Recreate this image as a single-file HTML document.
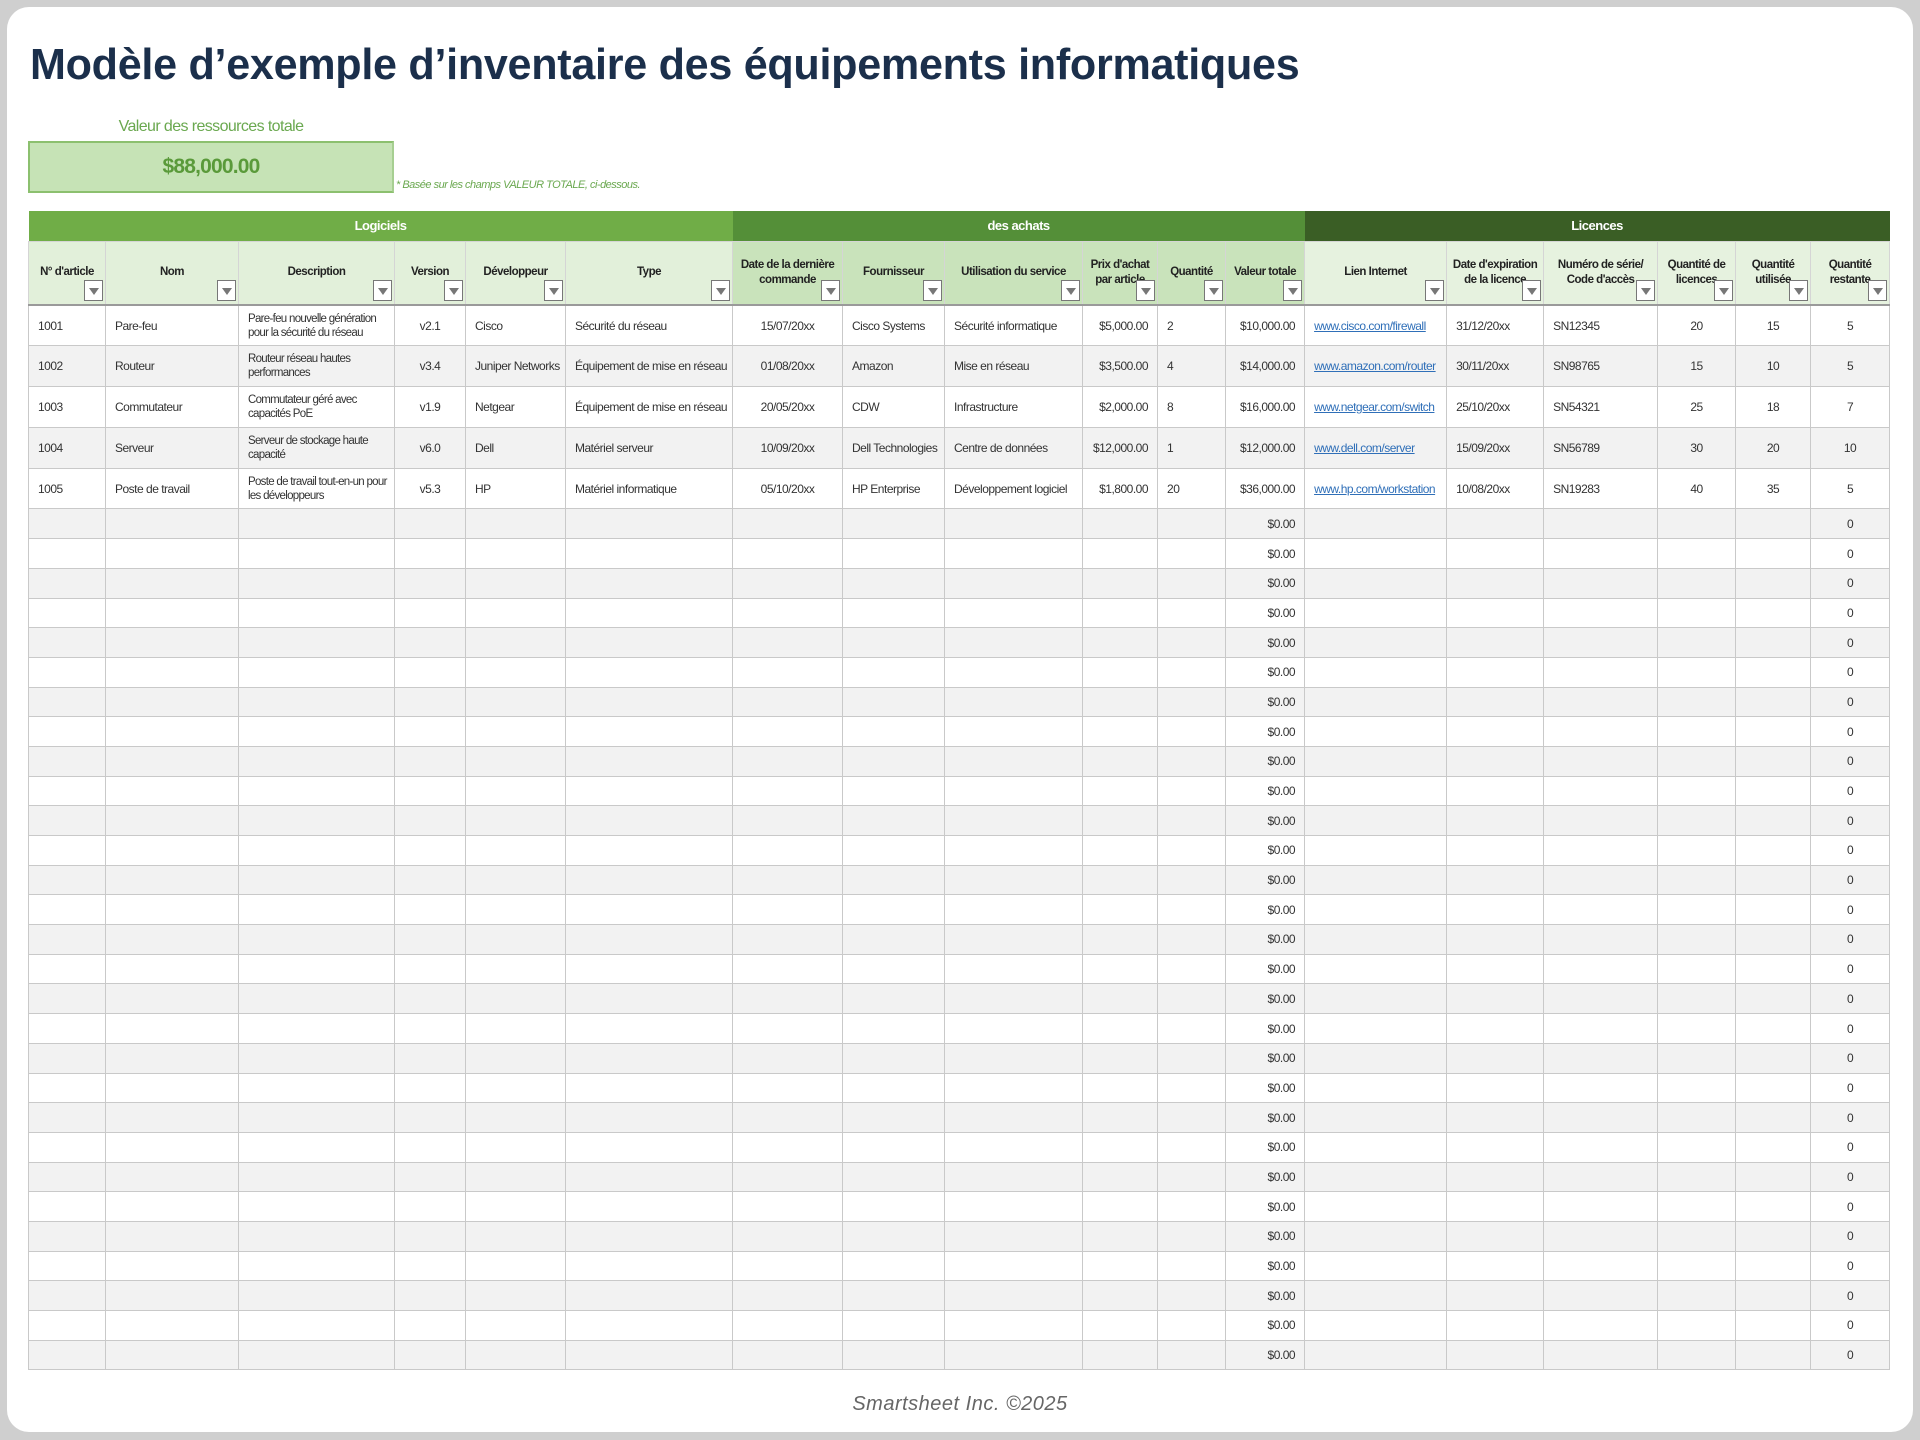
<!DOCTYPE html>
<html><head><meta charset="utf-8">
<style>
*{margin:0;padding:0;box-sizing:border-box}
html,body{width:1920px;height:1440px;background:#cfcfcf;overflow:hidden;font-family:"Liberation Sans",sans-serif}
.card{position:absolute;left:7px;top:7px;width:1906px;height:1425px;background:#fff;border-radius:22px}
.title{position:absolute;left:30px;top:40px;font-size:44px;font-weight:bold;color:#1b2f4b;white-space:nowrap;transform:scaleX(0.98);transform-origin:left top;letter-spacing:-0.3px}
.vlab{position:absolute;left:28px;width:366px;top:118px;text-align:center;color:#6aa84f;font-size:16px;letter-spacing:-0.6px}
.vbox{position:absolute;left:28px;top:141px;width:366px;height:52px;background:#c6e3b6;border:2px solid #8cc06f;border-right-color:#a7cf92;text-align:center;line-height:48px;color:#5a9a3a;font-weight:bold;font-size:21px;letter-spacing:-0.8px}
.note{position:absolute;left:396px;top:179px;color:#6aa84f;font-size:11px;font-style:italic;letter-spacing:-0.5px}
table{position:absolute;left:28px;top:211px;border-collapse:collapse;table-layout:fixed;width:1861px}
td{border:1px solid #c9c9c9;font-size:12px;color:#333;letter-spacing:-0.5px;padding:0 9px;overflow:hidden;white-space:nowrap}
tr.sec td{height:30px;color:#fff;font-weight:bold;text-align:center;font-size:13px;border:none}
tr.hd td{height:64px;font-weight:bold;text-align:center;font-size:11.5px;color:#222;position:relative;white-space:normal;line-height:15px;padding:0 4px;border-color:#d5d5d5;border-bottom:2px solid #9a9a9a}
tr.hd td.l{background:#e2f0da}
tr.hd td.a{background:#c9e3bb}
tr.hd td.c{background:#e6f2df}
.f{position:absolute;right:2px;bottom:3px;width:19px;height:21px;background:#fff;border:1px solid #777;}
.f:after{content:"";position:absolute;left:4px;top:7px;border-left:5px solid transparent;border-right:5px solid transparent;border-top:7px solid #777}
tr.d td{height:40.8px;line-height:14px}
tr.e td{height:29.7px}
tr.g td{background:#f2f2f2}
.r{text-align:right}.c2{text-align:center}
.w{white-space:normal!important;font-size:11.5px!important;padding:0 4px 0 9px!important;letter-spacing:-0.7px!important}
a{color:#2f6fb8;text-decoration:underline}
.foot{position:absolute;left:0;width:1920px;top:1393px;text-align:center;color:#666;font-style:italic;font-size:20px;letter-spacing:0.5px}
</style></head><body>
<div class="card"></div>
<div class="title">Modèle d’exemple d’inventaire des équipements informatiques</div>
<div class="vlab">Valeur des ressources totale</div>
<div class="vbox">$88,000.00</div>
<div class="note">* Basée sur les champs VALEUR TOTALE, ci-dessous.</div>
<table>
<colgroup>
<col style="width:77px"><col style="width:133px"><col style="width:156px"><col style="width:71px"><col style="width:100px"><col style="width:167px"><col style="width:110px"><col style="width:102px"><col style="width:138px"><col style="width:75px"><col style="width:68px"><col style="width:79px"><col style="width:142px"><col style="width:97px"><col style="width:114px"><col style="width:78px"><col style="width:75px"><col style="width:79px">
</colgroup>
<tr class="sec"><td colspan="6" style="background:#70ad47">Logiciels</td><td colspan="6" style="background:#548f38">des achats</td><td colspan="6" style="background:#3a5e25">Licences</td></tr>
<tr class="hd">
<td class="l">N° d'article<span class="f"></span></td>
<td class="l">Nom<span class="f"></span></td>
<td class="l">Description<span class="f"></span></td>
<td class="l">Version<span class="f"></span></td>
<td class="l">Développeur<span class="f"></span></td>
<td class="l">Type<span class="f"></span></td>
<td class="a">Date de la dernière commande<span class="f"></span></td>
<td class="a">Fournisseur<span class="f"></span></td>
<td class="a">Utilisation du service<span class="f"></span></td>
<td class="a">Prix d'achat par article<span class="f"></span></td>
<td class="a">Quantité<span class="f"></span></td>
<td class="a">Valeur totale<span class="f"></span></td>
<td class="c">Lien Internet<span class="f"></span></td>
<td class="c">Date d'expiration de la licence<span class="f"></span></td>
<td class="c">Numéro de série/ Code d'accès<span class="f"></span></td>
<td class="c">Quantité de licences<span class="f"></span></td>
<td class="c">Quantité utilisée<span class="f"></span></td>
<td class="c">Quantité restante<span class="f"></span></td>
</tr>
<tr class="d"><td>1001</td><td>Pare-feu</td><td class="w">Pare-feu nouvelle génération pour la sécurité du réseau</td><td class="c2">v2.1</td><td>Cisco</td><td>Sécurité du réseau</td><td class="c2">15/07/20xx</td><td>Cisco Systems</td><td>Sécurité informatique</td><td class="r">$5,000.00</td><td>2</td><td class="r">$10,000.00</td><td><a>www.cisco.com/firewall</a></td><td>31/12/20xx</td><td>SN12345</td><td class="c2">20</td><td class="c2">15</td><td class="c2">5</td></tr>
<tr class="d g"><td>1002</td><td>Routeur</td><td class="w">Routeur réseau hautes performances</td><td class="c2">v3.4</td><td>Juniper Networks</td><td>Équipement de mise en réseau</td><td class="c2">01/08/20xx</td><td>Amazon</td><td>Mise en réseau</td><td class="r">$3,500.00</td><td>4</td><td class="r">$14,000.00</td><td><a>www.amazon.com/router</a></td><td>30/11/20xx</td><td>SN98765</td><td class="c2">15</td><td class="c2">10</td><td class="c2">5</td></tr>
<tr class="d"><td>1003</td><td>Commutateur</td><td class="w">Commutateur géré avec capacités PoE</td><td class="c2">v1.9</td><td>Netgear</td><td>Équipement de mise en réseau</td><td class="c2">20/05/20xx</td><td>CDW</td><td>Infrastructure</td><td class="r">$2,000.00</td><td>8</td><td class="r">$16,000.00</td><td><a>www.netgear.com/switch</a></td><td>25/10/20xx</td><td>SN54321</td><td class="c2">25</td><td class="c2">18</td><td class="c2">7</td></tr>
<tr class="d g"><td>1004</td><td>Serveur</td><td class="w">Serveur de stockage haute capacité</td><td class="c2">v6.0</td><td>Dell</td><td>Matériel serveur</td><td class="c2">10/09/20xx</td><td>Dell Technologies</td><td>Centre de données</td><td class="r">$12,000.00</td><td>1</td><td class="r">$12,000.00</td><td><a>www.dell.com/server</a></td><td>15/09/20xx</td><td>SN56789</td><td class="c2">30</td><td class="c2">20</td><td class="c2">10</td></tr>
<tr class="d"><td>1005</td><td>Poste de travail</td><td class="w">Poste de travail tout-en-un pour les développeurs</td><td class="c2">v5.3</td><td>HP</td><td>Matériel informatique</td><td class="c2">05/10/20xx</td><td>HP Enterprise</td><td>Développement logiciel</td><td class="r">$1,800.00</td><td>20</td><td class="r">$36,000.00</td><td><a>www.hp.com/workstation</a></td><td>10/08/20xx</td><td>SN19283</td><td class="c2">40</td><td class="c2">35</td><td class="c2">5</td></tr>
<tr class="e g"><td></td><td></td><td></td><td></td><td></td><td></td><td></td><td></td><td></td><td></td><td></td><td class="r">$0.00</td><td></td><td></td><td></td><td></td><td></td><td class="c2">0</td></tr>
<tr class="e"><td></td><td></td><td></td><td></td><td></td><td></td><td></td><td></td><td></td><td></td><td></td><td class="r">$0.00</td><td></td><td></td><td></td><td></td><td></td><td class="c2">0</td></tr>
<tr class="e g"><td></td><td></td><td></td><td></td><td></td><td></td><td></td><td></td><td></td><td></td><td></td><td class="r">$0.00</td><td></td><td></td><td></td><td></td><td></td><td class="c2">0</td></tr>
<tr class="e"><td></td><td></td><td></td><td></td><td></td><td></td><td></td><td></td><td></td><td></td><td></td><td class="r">$0.00</td><td></td><td></td><td></td><td></td><td></td><td class="c2">0</td></tr>
<tr class="e g"><td></td><td></td><td></td><td></td><td></td><td></td><td></td><td></td><td></td><td></td><td></td><td class="r">$0.00</td><td></td><td></td><td></td><td></td><td></td><td class="c2">0</td></tr>
<tr class="e"><td></td><td></td><td></td><td></td><td></td><td></td><td></td><td></td><td></td><td></td><td></td><td class="r">$0.00</td><td></td><td></td><td></td><td></td><td></td><td class="c2">0</td></tr>
<tr class="e g"><td></td><td></td><td></td><td></td><td></td><td></td><td></td><td></td><td></td><td></td><td></td><td class="r">$0.00</td><td></td><td></td><td></td><td></td><td></td><td class="c2">0</td></tr>
<tr class="e"><td></td><td></td><td></td><td></td><td></td><td></td><td></td><td></td><td></td><td></td><td></td><td class="r">$0.00</td><td></td><td></td><td></td><td></td><td></td><td class="c2">0</td></tr>
<tr class="e g"><td></td><td></td><td></td><td></td><td></td><td></td><td></td><td></td><td></td><td></td><td></td><td class="r">$0.00</td><td></td><td></td><td></td><td></td><td></td><td class="c2">0</td></tr>
<tr class="e"><td></td><td></td><td></td><td></td><td></td><td></td><td></td><td></td><td></td><td></td><td></td><td class="r">$0.00</td><td></td><td></td><td></td><td></td><td></td><td class="c2">0</td></tr>
<tr class="e g"><td></td><td></td><td></td><td></td><td></td><td></td><td></td><td></td><td></td><td></td><td></td><td class="r">$0.00</td><td></td><td></td><td></td><td></td><td></td><td class="c2">0</td></tr>
<tr class="e"><td></td><td></td><td></td><td></td><td></td><td></td><td></td><td></td><td></td><td></td><td></td><td class="r">$0.00</td><td></td><td></td><td></td><td></td><td></td><td class="c2">0</td></tr>
<tr class="e g"><td></td><td></td><td></td><td></td><td></td><td></td><td></td><td></td><td></td><td></td><td></td><td class="r">$0.00</td><td></td><td></td><td></td><td></td><td></td><td class="c2">0</td></tr>
<tr class="e"><td></td><td></td><td></td><td></td><td></td><td></td><td></td><td></td><td></td><td></td><td></td><td class="r">$0.00</td><td></td><td></td><td></td><td></td><td></td><td class="c2">0</td></tr>
<tr class="e g"><td></td><td></td><td></td><td></td><td></td><td></td><td></td><td></td><td></td><td></td><td></td><td class="r">$0.00</td><td></td><td></td><td></td><td></td><td></td><td class="c2">0</td></tr>
<tr class="e"><td></td><td></td><td></td><td></td><td></td><td></td><td></td><td></td><td></td><td></td><td></td><td class="r">$0.00</td><td></td><td></td><td></td><td></td><td></td><td class="c2">0</td></tr>
<tr class="e g"><td></td><td></td><td></td><td></td><td></td><td></td><td></td><td></td><td></td><td></td><td></td><td class="r">$0.00</td><td></td><td></td><td></td><td></td><td></td><td class="c2">0</td></tr>
<tr class="e"><td></td><td></td><td></td><td></td><td></td><td></td><td></td><td></td><td></td><td></td><td></td><td class="r">$0.00</td><td></td><td></td><td></td><td></td><td></td><td class="c2">0</td></tr>
<tr class="e g"><td></td><td></td><td></td><td></td><td></td><td></td><td></td><td></td><td></td><td></td><td></td><td class="r">$0.00</td><td></td><td></td><td></td><td></td><td></td><td class="c2">0</td></tr>
<tr class="e"><td></td><td></td><td></td><td></td><td></td><td></td><td></td><td></td><td></td><td></td><td></td><td class="r">$0.00</td><td></td><td></td><td></td><td></td><td></td><td class="c2">0</td></tr>
<tr class="e g"><td></td><td></td><td></td><td></td><td></td><td></td><td></td><td></td><td></td><td></td><td></td><td class="r">$0.00</td><td></td><td></td><td></td><td></td><td></td><td class="c2">0</td></tr>
<tr class="e"><td></td><td></td><td></td><td></td><td></td><td></td><td></td><td></td><td></td><td></td><td></td><td class="r">$0.00</td><td></td><td></td><td></td><td></td><td></td><td class="c2">0</td></tr>
<tr class="e g"><td></td><td></td><td></td><td></td><td></td><td></td><td></td><td></td><td></td><td></td><td></td><td class="r">$0.00</td><td></td><td></td><td></td><td></td><td></td><td class="c2">0</td></tr>
<tr class="e"><td></td><td></td><td></td><td></td><td></td><td></td><td></td><td></td><td></td><td></td><td></td><td class="r">$0.00</td><td></td><td></td><td></td><td></td><td></td><td class="c2">0</td></tr>
<tr class="e g"><td></td><td></td><td></td><td></td><td></td><td></td><td></td><td></td><td></td><td></td><td></td><td class="r">$0.00</td><td></td><td></td><td></td><td></td><td></td><td class="c2">0</td></tr>
<tr class="e"><td></td><td></td><td></td><td></td><td></td><td></td><td></td><td></td><td></td><td></td><td></td><td class="r">$0.00</td><td></td><td></td><td></td><td></td><td></td><td class="c2">0</td></tr>
<tr class="e g"><td></td><td></td><td></td><td></td><td></td><td></td><td></td><td></td><td></td><td></td><td></td><td class="r">$0.00</td><td></td><td></td><td></td><td></td><td></td><td class="c2">0</td></tr>
<tr class="e"><td></td><td></td><td></td><td></td><td></td><td></td><td></td><td></td><td></td><td></td><td></td><td class="r">$0.00</td><td></td><td></td><td></td><td></td><td></td><td class="c2">0</td></tr>
<tr class="e g"><td></td><td></td><td></td><td></td><td></td><td></td><td></td><td></td><td></td><td></td><td></td><td class="r">$0.00</td><td></td><td></td><td></td><td></td><td></td><td class="c2">0</td></tr>
</table>
<div class="foot">Smartsheet Inc. ©2025</div>
</body></html>
